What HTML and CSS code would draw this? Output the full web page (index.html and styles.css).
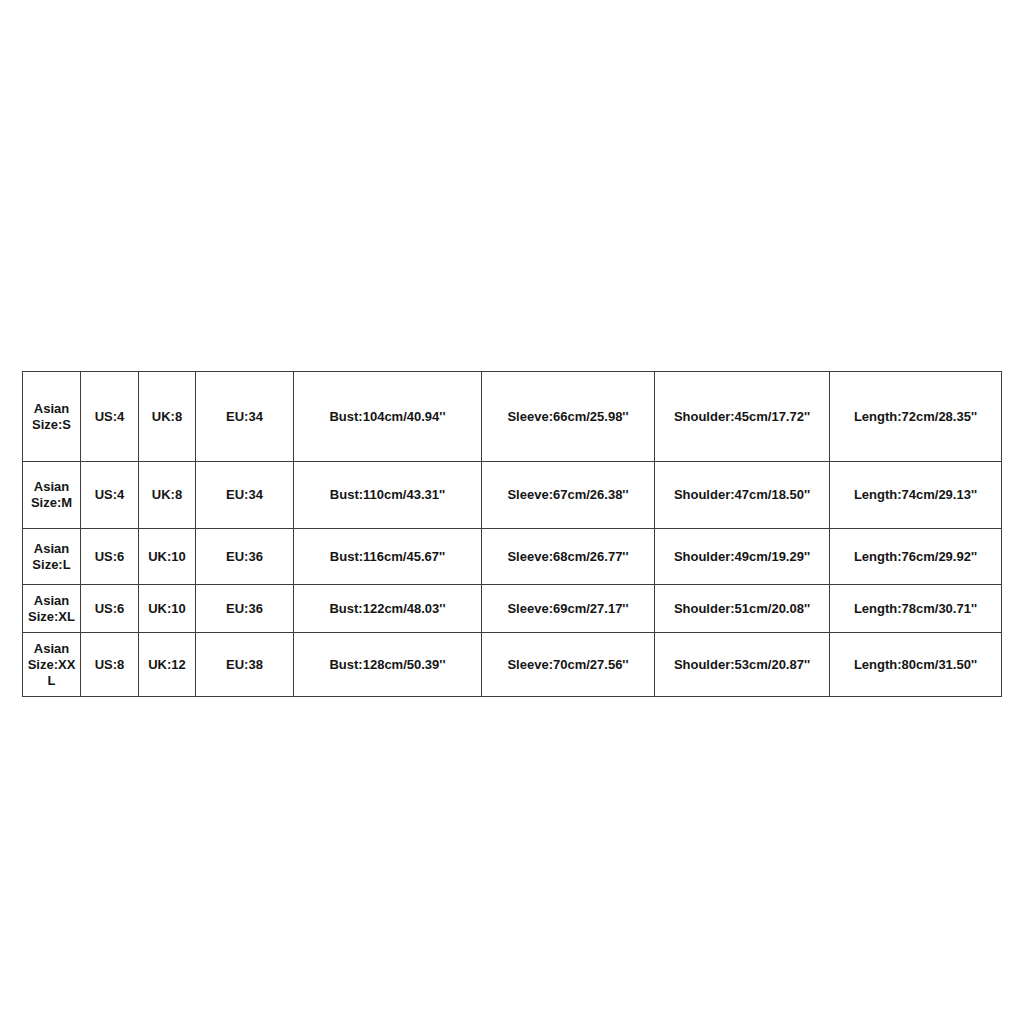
FILE: index.html
```html
<!DOCTYPE html>
<html>
<head>
<meta charset="utf-8">
<link rel="stylesheet" href="styles.css">
</head>
<body>
<div class="page">
<table class="size-table">
  <colgroup>
    <col class="c1"><col class="c2"><col class="c3"><col class="c4"><col class="c5"><col class="c6"><col class="c7"><col class="c8">
  </colgroup>
  <tr class="r1">
    <td class="label">Asian<br>Size:S</td><td>US:4</td><td>UK:8</td><td>EU:34</td><td>Bust:104cm/40.94''</td><td>Sleeve:66cm/25.98''</td><td>Shoulder:45cm/17.72''</td><td>Length:72cm/28.35''</td>
  </tr>
  <tr class="r2">
    <td class="label">Asian<br>Size:M</td><td>US:4</td><td>UK:8</td><td>EU:34</td><td>Bust:110cm/43.31''</td><td>Sleeve:67cm/26.38''</td><td>Shoulder:47cm/18.50''</td><td>Length:74cm/29.13''</td>
  </tr>
  <tr class="r3">
    <td class="label">Asian<br>Size:L</td><td>US:6</td><td>UK:10</td><td>EU:36</td><td>Bust:116cm/45.67''</td><td>Sleeve:68cm/26.77''</td><td>Shoulder:49cm/19.29''</td><td>Length:76cm/29.92''</td>
  </tr>
  <tr class="r4">
    <td class="label">Asian<br>Size:XL</td><td>US:6</td><td>UK:10</td><td>EU:36</td><td>Bust:122cm/48.03''</td><td>Sleeve:69cm/27.17''</td><td>Shoulder:51cm/20.08''</td><td>Length:78cm/30.71''</td>
  </tr>
  <tr class="r5">
    <td class="label">Asian<br>Size:XX<br>L</td><td>US:8</td><td>UK:12</td><td>EU:38</td><td>Bust:128cm/50.39''</td><td>Sleeve:70cm/27.56''</td><td>Shoulder:53cm/20.87''</td><td>Length:80cm/31.50''</td>
  </tr>
</table>
</div>
</body>
</html>
```
FILE: styles.css
```css
html, body {
  margin: 0;
  padding: 0;
  background: #ffffff;
}
.page {
  width: 1024px;
  height: 1024px;
  padding: 371px 0 0 22px;
  box-sizing: border-box;
}
.size-table {
  border-collapse: collapse;
  table-layout: fixed;
  width: 980px;
  font-family: "Liberation Sans", Arial, sans-serif;
  font-weight: bold;
  font-size: 13px;
  line-height: 16px;
  color: #151515;
}
.size-table td {
  border: 1px solid #3c3c3c;
  padding: 0;
  text-align: center;
  vertical-align: middle;
  white-space: nowrap;
}
.c1 { width: 58px; }
.c2 { width: 58px; }
.c3 { width: 57px; }
.c4 { width: 98px; }
.c5 { width: 188px; }
.c6 { width: 173px; }
.c7 { width: 175px; }
.c8 { width: 172px; }
.r1 td { height: 89px; }
.r2 td { height: 66px; }
.r3 td { height: 55px; }
.r4 td { height: 47px; }
.r5 td { height: 63px; }
```
